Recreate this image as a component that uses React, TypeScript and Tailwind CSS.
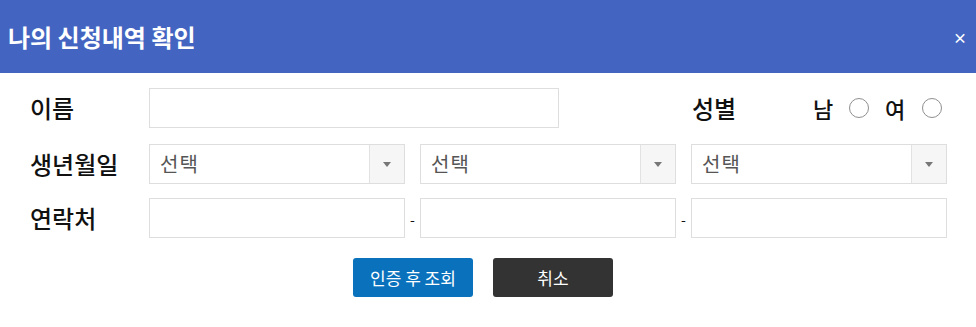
import React from "react";

const font = { fontFamily: '"Noto Sans CJK KR", "Noto Sans", sans-serif' };

function SelectBox() {
  return (
    <div className="flex h-[40px] w-[256px] border border-[#dedede] bg-white">
      <div className="flex flex-1 items-center pl-[10px] text-[20px] tracking-[1px] text-[#555]">선택</div>
      <div className="flex w-[35px] items-center justify-center border-l border-[#e2e2e2] bg-[#f6f6f6]">
        <span className="block h-0 w-0 border-x-[4px] border-t-[5px] border-x-transparent border-t-[#777]" />
      </div>
    </div>
  );
}

function Radio() {
  return <span className="block h-[20px] w-[20px] rounded-full border border-[#8f8f8f] bg-white" />;
}

export default function App() {
  return (
    <div className="h-[327px] w-[976px] bg-white" style={font}>
      <div className="flex h-[73px] items-center justify-between bg-[#4365c1] pl-[8px] pr-[9px]">
        <h1 className="text-[24px] font-bold text-white">나의 신청내역 확인</h1>
        <button className="text-[14px] font-bold leading-none text-white">×</button>
      </div>

      <div className="pl-[30px] text-[#111]">
        <div className="mt-[15px] flex h-[40px] items-center">
          <label className="w-[119px] text-[24px] font-medium">이름</label>
          <input className="h-[40px] w-[410px] border border-[#dedede] outline-none" />
          <span className="ml-[133px] w-[121px] text-[24px] font-medium">성별</span>
          <span className="w-[20px] text-[22px] font-medium">남</span>
          <span className="ml-[16px]"><Radio /></span>
          <span className="ml-[16px] w-[20px] text-[22px] font-medium">여</span>
          <span className="ml-[17px]"><Radio /></span>
        </div>

        <div className="mt-[16px] flex h-[40px] items-center">
          <label className="w-[119px] text-[24px] font-medium">생년월일</label>
          <div className="flex gap-[15px]">
            <SelectBox />
            <SelectBox />
            <SelectBox />
          </div>
        </div>

        <div className="mt-[14px] flex h-[40px] items-center">
          <label className="w-[119px] text-[24px] font-medium">연락처</label>
          <input className="h-[40px] w-[256px] border border-[#dedede] outline-none" />
          <span className="w-[15px] pt-[2px] text-center text-[14px]">-</span>
          <input className="h-[40px] w-[256px] border border-[#dedede] outline-none" />
          <span className="w-[15px] pt-[2px] text-center text-[14px]">-</span>
          <input className="h-[40px] w-[256px] border border-[#dedede] outline-none" />
        </div>
      </div>

      <div className="mt-[20px] flex gap-[20px] pl-[353px]">
        <button className="h-[39px] w-[120px] rounded-[3px] bg-[#0a71bd] text-[17px] text-white">인증 후 조회</button>
        <button className="h-[39px] w-[120px] rounded-[3px] bg-[#333333] text-[17px] text-white">취소</button>
      </div>
    </div>
  );
}
